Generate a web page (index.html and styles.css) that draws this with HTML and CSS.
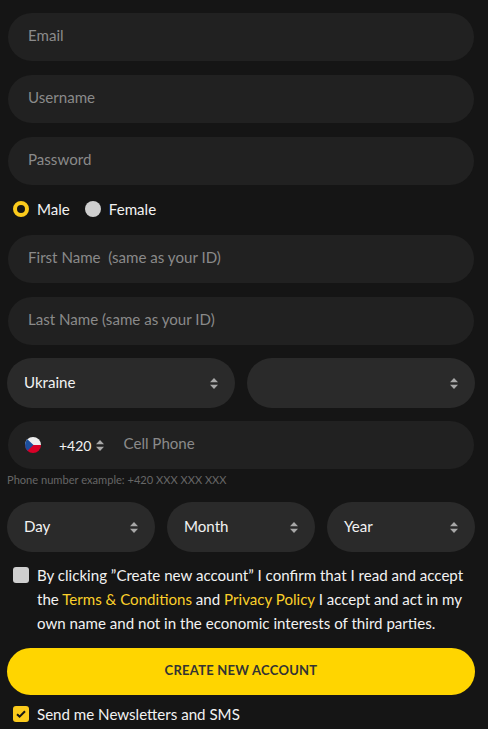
FILE: index.html
```html
<!DOCTYPE html>
<html lang="en">
<head>
<meta charset="utf-8">
<title>Create account</title>
<link rel="stylesheet" href="styles.css">
</head>
<body>
<form class="form">
  <div class="field field-first"><span class="ph">Email</span></div>
  <div class="field field-gap"><span class="ph">Username</span></div>
  <div class="field field-gap"><span class="ph">Password</span></div>
  <div class="radios">
    <span class="radio radio-on"></span><span class="radio-label">Male</span>
    <span class="radio radio-off"></span><span class="radio-label">Female</span>
  </div>
  <div class="field"><span class="ph">First Name&nbsp; (same as your ID)</span></div>
  <div class="field field-gap"><span class="ph">Last Name (same as your ID)</span></div>
  <div class="select-row select-row-two">
    <div class="select"><span>Ukraine</span><svg class="arrows" viewBox="0 0 8 11"><path d="M4 0 8 4.3H0zM4 11 0 6.7h8z"/></svg></div>
    <div class="select"><span></span><svg class="arrows" viewBox="0 0 8 11"><path d="M4 0 8 4.3H0zM4 11 0 6.7h8z"/></svg></div>
  </div>
  <div class="field phone">
    <svg class="flag" viewBox="0 0 16 16"><defs><clipPath id="c"><circle cx="8" cy="8" r="8"/></clipPath></defs><g clip-path="url(#c)"><rect width="16" height="8" fill="#eeeeee"/><rect y="8" width="16" height="8" fill="#d80027"/><path d="M0 0 8.5 8 0 16z" fill="#1c4e9c"/></g></svg>
    <span class="code">+420</span>
    <svg class="arrows arrows-light" viewBox="0 0 8 11"><path d="M4 0 8 4.3H0zM4 11 0 6.7h8z"/></svg>
    <span class="ph ph-phone">Cell Phone</span>
  </div>
  <div class="hint">Phone number example: +420 XXX XXX XXX</div>
  <div class="select-row select-row-three">
    <div class="select"><span>Day</span><svg class="arrows" viewBox="0 0 8 11"><path d="M4 0 8 4.3H0zM4 11 0 6.7h8z"/></svg></div>
    <div class="select"><span>Month</span><svg class="arrows" viewBox="0 0 8 11"><path d="M4 0 8 4.3H0zM4 11 0 6.7h8z"/></svg></div>
    <div class="select"><span>Year</span><svg class="arrows" viewBox="0 0 8 11"><path d="M4 0 8 4.3H0zM4 11 0 6.7h8z"/></svg></div>
  </div>
  <div class="terms">
    <span class="box"></span>
    <p class="terms-text">By clicking ”Create new account” I confirm that I read and accept the <a href="#">Terms &amp; Conditions</a> and <a href="#">Privacy Policy</a> I accept and act in my own name and not in the economic interests of third parties.</p>
  </div>
  <button class="submit" type="button">CREATE NEW ACCOUNT</button>
  <div class="news">
    <span class="box box-on"><svg viewBox="0 0 10 8"><path d="M1 4.2 3.6 6.6 9 1.2" fill="none" stroke="#151515" stroke-width="2"/></svg></span>
    <span>Send me Newsletters and SMS</span>
  </div>
</form>
</body>
</html>
```
FILE: styles.css
```css
* { box-sizing: border-box; }
html, body { margin: 0; height: 100%; overflow: hidden; }
body { background: #151515; color: #f2f2f2; font-family: "Lato", "Open Sans", sans-serif; font-size: 15.1px; }
.form { padding: 13px 13px 0 7px; display: flex; flex-direction: column; }
.field { height: 48px; margin-left: 1px; margin-right: 1px; background: #212121; border-radius: 24px; padding-left: 20px; padding-bottom: 5px; display: flex; align-items: center; }
.field-gap { margin-top: 14px; }
.ph { color: #8a8a8a; }
.radios { height: 50px; padding-left: 6px; padding-bottom: 3px; display: flex; align-items: center; }
.radio { width: 16px; height: 16px; border-radius: 50%; flex: none; }
.radio-on { background: #151515; border: 4px solid #fbcb1c; }
.radio-off { background: #cfcfcf; }
.radio-label { margin-left: 8px; margin-right: 15px; }
.select-row { display: grid; margin-top: 13px; }
.select-row-two { grid-template-columns: 228px 228px; column-gap: 12px; }
.select-row-three { grid-template-columns: 148px 148px 148px; column-gap: 12px; margin-top: 11px; }
.select { height: 50px; background: #2a2a2a; border-radius: 25px; padding: 0 17px 0 17px; display: flex; align-items: center; justify-content: space-between; }
.select span { margin-bottom: 3px; }
.arrows { width: 8px; height: 11px; fill: #a8a8a8; flex: none; }
.arrows-light { fill: #a8a8a8; margin-left: 5px; }
.phone { margin-top: 13px; padding-left: 17px; padding-bottom: 0; }
.flag { width: 16px; height: 16px; flex: none; }
.code { margin-left: 18px; font-size: 14px; color: #f2f2f2; }
.ph-phone { margin-left: 19px; margin-bottom: 5px; }
.hint { font-size: 11.1px; color: #666; height: 22px; padding-top: 3px; line-height: 16px; }
.terms { display: flex; margin-top: 11px; padding-left: 6px; }
.box { width: 16px; height: 16px; border-radius: 3px; background: #cfcfcf; flex: none; }
.terms .box { margin-top: 4px; }
.terms-text { margin: 0 0 0 8px; line-height: 24px; }
.terms-text a { color: #fbd02a; text-decoration: none; }
.submit { height: 47px; margin-top: 13px; padding-bottom: 5px; border: 0; border-radius: 24px; background: #ffd500; color: #333; font: 700 13px "Lato", sans-serif; letter-spacing: .25px; }
.news { display: flex; align-items: center; margin-top: 7px; padding-left: 6px; gap: 8px; height: 24px; }
.box-on { background: #fbcb1c; display: flex; align-items: center; justify-content: center; }
.box-on svg { width: 10px; height: 8px; }
```
